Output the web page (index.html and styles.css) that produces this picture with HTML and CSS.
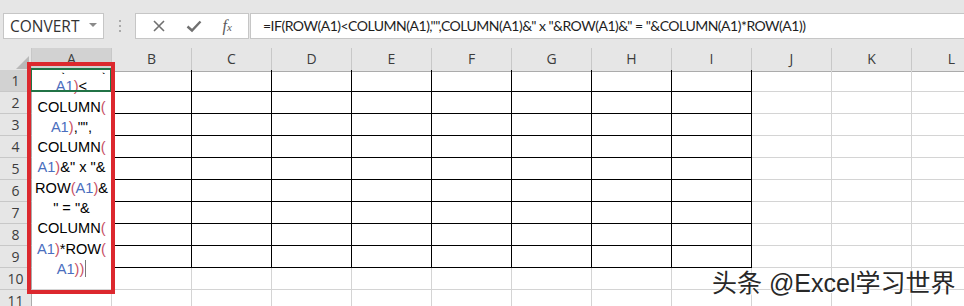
FILE: index.html
```html
<!DOCTYPE html>
<html lang="en">
<head>
  <meta charset="UTF-8">
  <meta name="viewport" content="width=device-width, initial-scale=1.0">
  <title>CONVERT</title>
  <link rel="stylesheet" href="styles.css">
</head>
<body>
  <div class="page">
    <!-- name box + formula bar -->
    <div class="topbar">
      <div class="namebox">
        <span>CONVERT</span>
        <svg class="drop" width="8" height="5" viewBox="0 0 8 5"><polygon points="0,0 8,0 4,4" fill="#8a8a8a"/></svg>
      </div>
      <div class="grip"><i></i><i></i><i></i></div>
      <div class="fxbtns">
        <svg width="14" height="14" viewBox="0 0 14 14"><path d="M2 2 L12 12 M12 2 L2 12" stroke="#707070" stroke-width="1.6"/></svg>
        <svg width="16" height="14" viewBox="0 0 16 14"><path d="M1.5 7.5 L6 11.5 L14.5 2.5" stroke="#707070" stroke-width="2.4" fill="none"/></svg>
        <span class="fx">f<small>x</small></span>
      </div>
      <div class="formula">=IF(ROW(A1)&lt;COLUMN(A1),"",COLUMN(A1)&amp;" x "&amp;ROW(A1)&amp;" = "&amp;COLUMN(A1)*ROW(A1))</div>
    </div>

    <div class="sheet">
      <div class="row head">
        <div class="corner"><svg width="13" height="13" viewBox="0 0 13 13"><polygon points="13,0 13,13 0,13" fill="#b9b9b9"/></svg></div>
        <div class="ch sel">A</div><div class="ch">B</div><div class="ch">C</div><div class="ch">D</div>
        <div class="ch">E</div><div class="ch">F</div><div class="ch">G</div><div class="ch">H</div>
        <div class="ch">I</div><div class="ch">J</div><div class="ch">K</div><div class="ch">L</div>
      </div>
      <div class="row"><div class="rh sel">1</div><div class="c k"></div><div class="c k"></div><div class="c k"></div><div class="c k"></div><div class="c k"></div><div class="c k"></div><div class="c k"></div><div class="c k"></div><div class="c k"></div><div class="c"></div><div class="c"></div><div class="c"></div></div>
      <div class="row"><div class="rh">2</div><div class="c k"></div><div class="c k"></div><div class="c k"></div><div class="c k"></div><div class="c k"></div><div class="c k"></div><div class="c k"></div><div class="c k"></div><div class="c k"></div><div class="c"></div><div class="c"></div><div class="c"></div></div>
      <div class="row"><div class="rh">3</div><div class="c k"></div><div class="c k"></div><div class="c k"></div><div class="c k"></div><div class="c k"></div><div class="c k"></div><div class="c k"></div><div class="c k"></div><div class="c k"></div><div class="c"></div><div class="c"></div><div class="c"></div></div>
      <div class="row"><div class="rh">4</div><div class="c k"></div><div class="c k"></div><div class="c k"></div><div class="c k"></div><div class="c k"></div><div class="c k"></div><div class="c k"></div><div class="c k"></div><div class="c k"></div><div class="c"></div><div class="c"></div><div class="c"></div></div>
      <div class="row"><div class="rh">5</div><div class="c k"></div><div class="c k"></div><div class="c k"></div><div class="c k"></div><div class="c k"></div><div class="c k"></div><div class="c k"></div><div class="c k"></div><div class="c k"></div><div class="c"></div><div class="c"></div><div class="c"></div></div>
      <div class="row"><div class="rh">6</div><div class="c k"></div><div class="c k"></div><div class="c k"></div><div class="c k"></div><div class="c k"></div><div class="c k"></div><div class="c k"></div><div class="c k"></div><div class="c k"></div><div class="c"></div><div class="c"></div><div class="c"></div></div>
      <div class="row"><div class="rh">7</div><div class="c k"></div><div class="c k"></div><div class="c k"></div><div class="c k"></div><div class="c k"></div><div class="c k"></div><div class="c k"></div><div class="c k"></div><div class="c k"></div><div class="c"></div><div class="c"></div><div class="c"></div></div>
      <div class="row"><div class="rh">8</div><div class="c k"></div><div class="c k"></div><div class="c k"></div><div class="c k"></div><div class="c k"></div><div class="c k"></div><div class="c k"></div><div class="c k"></div><div class="c k"></div><div class="c"></div><div class="c"></div><div class="c"></div></div>
      <div class="row"><div class="rh">9</div><div class="c k"></div><div class="c k"></div><div class="c k"></div><div class="c k"></div><div class="c k"></div><div class="c k"></div><div class="c k"></div><div class="c k"></div><div class="c k"></div><div class="c"></div><div class="c"></div><div class="c"></div></div>
      <div class="row"><div class="rh">10</div><div class="c"></div><div class="c"></div><div class="c"></div><div class="c"></div><div class="c"></div><div class="c"></div><div class="c"></div><div class="c"></div><div class="c"></div><div class="c"></div><div class="c"></div><div class="c"></div></div>
      <div class="row"><div class="rh">11</div><div class="c"></div><div class="c"></div><div class="c"></div><div class="c"></div><div class="c"></div><div class="c"></div><div class="c"></div><div class="c"></div><div class="c"></div><div class="c"></div><div class="c"></div><div class="c"></div></div>

      <!-- in-cell editor, wrapped and scrolled down one line -->
      <div class="editor">
        <div class="lines">
          <div class="scrolled">=IF(ROW(</div>
          <div><b>A1</b><em>)</em>&lt;</div>
          <div>COLUMN<em>(</em></div>
          <div><b>A1</b><em>)</em>,"",</div>
          <div>COLUMN<em>(</em></div>
          <div><b>A1</b><em>)</em>&amp;" x "&amp;</div>
          <div>ROW<em>(</em><b>A1</b><em>)</em>&amp;</div>
          <div>" = "&amp;</div>
          <div>COLUMN<em>(</em></div>
          <div><b>A1</b><em>)</em>*ROW<em>(</em></div>
          <div><b>A1</b><em>))</em><span class="caret"></span></div>
        </div>
      </div>
      <div class="active"></div>
      <div class="mark"></div>
    </div>

    <div class="watermark">头条 @Excel学习世界</div>
  </div>
</body>
</html>
```

FILE: styles.css
```css
body{
  margin: 0;
  background-color: white;
  font-family: "Open Sans", "Liberation Sans", sans-serif;
}
.page{
  position: relative;
  width: 964px;
  height: 306px;
  overflow: hidden;
}
.topbar{
  height: 48px;
  background-color: rgb(230, 230, 230);
  display: flex;
  align-items: flex-start;
  padding-top: 13px;
  box-sizing: border-box;
}
.namebox{
  margin-left: 3px;
  width: 101px;
  height: 26px;
  box-sizing: border-box;
  background-color: white;
  border: 1px solid rgb(198, 198, 198);
  display: flex;
  align-items: center;
  justify-content: space-between;
  padding: 0 6px 0 6px;
  font-size: 15.5px;
  color: rgb(50, 50, 50);
}
.drop{
  margin-top: -2px;
}
.grip{
  width: 31px;
  height: 26px;
  display: flex;
  flex-direction: column;
  align-items: center;
  justify-content: center;
  gap: 3px;
}
.grip i{
  width: 2px;
  height: 2px;
  background-color: rgb(170, 170, 170);
}
.fxbtns{
  width: 114px;
  height: 26px;
  box-sizing: border-box;
  background-color: white;
  border: 1px solid rgb(198, 198, 198);
  display: flex;
  align-items: center;
  justify-content: space-around;
  padding: 0 6px;
}
.fx{
  font-family: "Liberation Serif", serif;
  font-style: italic;
  font-size: 16px;
  color: rgb(90, 90, 90);
}
.fx small{
  font-size: 11px;
}
.formula{
  flex: 1;
  margin-left: 1px;
  height: 26px;
  box-sizing: border-box;
  background-color: white;
  border: 1px solid rgb(198, 198, 198);
  border-right: none;
  padding-left: 12px;
  font-family: Lato, "Open Sans", sans-serif;
  font-size: 14px;
  letter-spacing: -0.5px;
  line-height: 24px;
  color: rgb(30, 30, 30);
  white-space: nowrap;
}

/* grid */
.sheet{
  position: relative;
}
.row{
  display: grid;
  grid-template-columns: 32px repeat(12, 80px);
  height: 22px;
}
.row > div{
  box-sizing: border-box;
  border-right: 1px solid rgb(212, 212, 212);
  border-bottom: 1px solid rgb(212, 212, 212);
}
.head > div{
  background-color: rgb(230, 230, 230);
  border-right-color: rgb(200, 200, 200);
  border-bottom-color: rgb(171, 171, 171);
}
.ch{
  text-align: center;
  font-size: 14px;
  line-height: 22px;
  color: rgb(60, 60, 60);
}
.ch.sel{
  background-color: rgb(210, 210, 210);
  border-bottom: 2px solid rgb(33, 115, 70);
}
.corner{
  display: flex;
  align-items: flex-end;
  justify-content: flex-end;
  padding: 0 2px 2px 0;
}
.row > .rh{
  background-color: rgb(230, 230, 230);
  border-right-color: rgb(171, 171, 171);
  border-bottom-color: rgb(200, 200, 200);
  text-align: center;
  font-size: 14px;
  line-height: 21px;
  color: rgb(60, 60, 60);
}
.row > .rh.sel{
  background-color: rgb(210, 210, 210);
}
.row > .k{
  border-right-color: black;
  border-bottom-color: black;
}

.editor{
  position: absolute;
  left: 32px;
  top: 22px;
  width: 79px;
  height: 219px;
  background-color: white;
  overflow: hidden;
}
.lines{
  margin-top: -14px;
  font-family: "Liberation Sans", Arial, sans-serif;
  font-size: 14.6px;
  line-height: 20.3px;
  color: black;
  text-align: center;
}
.lines div{
  white-space: pre;
}
/* only the bottom edge of the line above is still in view */
.lines .scrolled{
  clip-path: inset(82% 0 0 0);
}
.lines b{
  font-weight: normal;
  color: rgb(74, 110, 190);
}
.lines em{
  font-style: normal;
  color: rgb(200, 80, 100);
}
.caret{
  display: inline-block;
  width: 1px;
  height: 17px;
  margin-left: 1px;
  vertical-align: -3px;
  background-color: rgb(120, 120, 120);
}
.active{
  position: absolute;
  left: 30px;
  top: 20px;
  width: 81px;
  height: 24px;
  box-sizing: border-box;
  border: 2px solid rgb(33, 115, 70);
  border-right-width: 1px;
}
.mark{
  position: absolute;
  left: 27px;
  top: 14px;
  width: 88px;
  height: 232px;
  box-sizing: border-box;
  border: 4px solid rgb(220, 40, 46);
}

.watermark{
  position: absolute;
  left: 712px;
  top: 268px;
  font-family: "Liberation Sans", "Noto Sans CJK SC", sans-serif;
  font-size: 25px;
  line-height: 30px;
  color: rgb(40, 40, 40);
  text-shadow: 1px 1px 0 white, -1px 0 0 rgba(255, 255, 255, 0.8);
  white-space: nowrap;
}
```
